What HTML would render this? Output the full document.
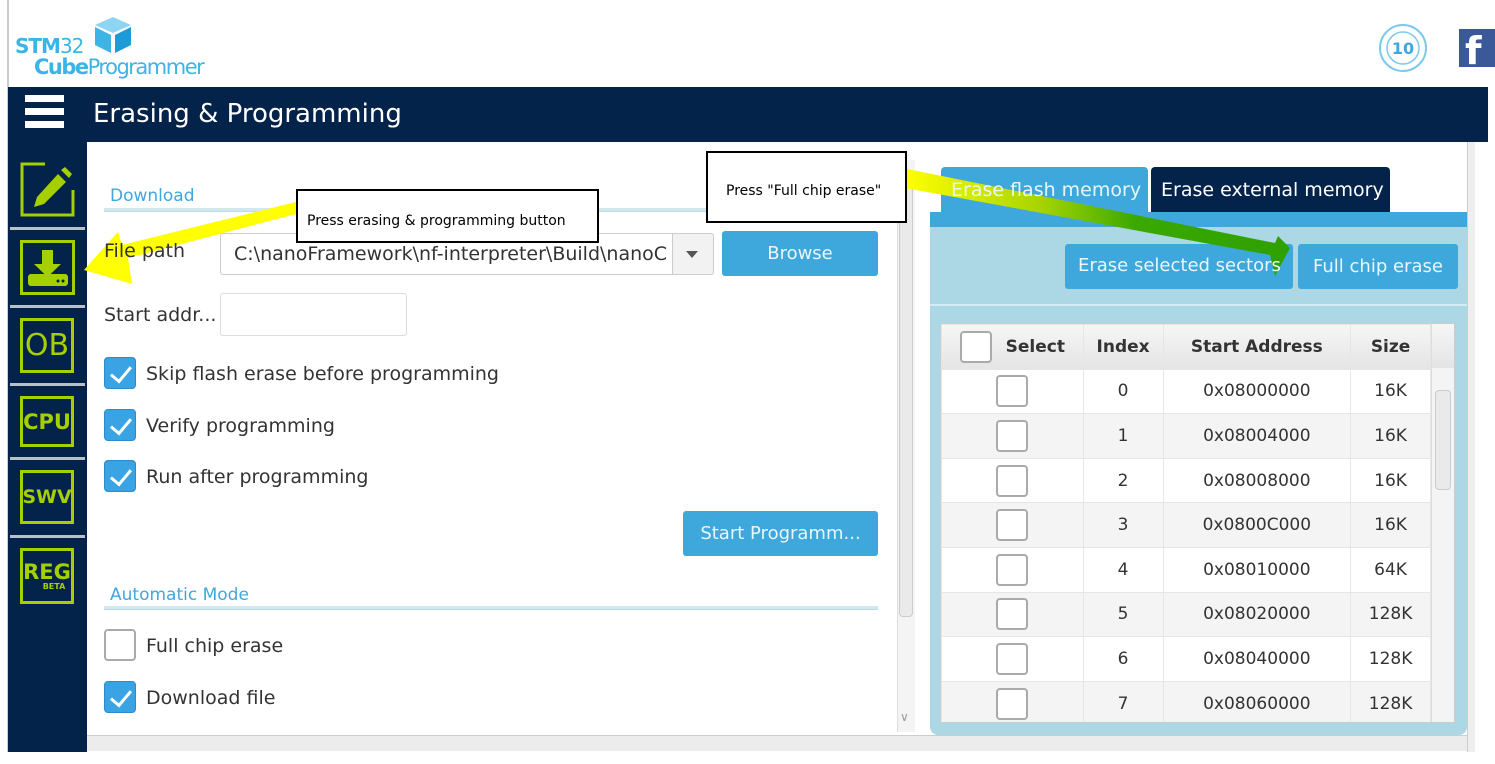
<!DOCTYPE html>
<html><head><meta charset="utf-8"><style>
*{margin:0;padding:0;box-sizing:border-box}
body{width:1495px;height:764px;position:relative;overflow:hidden;background:#fff;font-family:"DejaVu Sans","Liberation Sans",sans-serif;color:#333}
.a{position:absolute}
.nav{background:#03234b}
.ib{position:absolute;left:20px;width:54px;border:3px solid #a6cf00;color:#a6cf00;font-weight:bold;display:flex;align-items:center;justify-content:center}
.sep{position:absolute;left:10px;width:75px;height:3px;background:#b8c0cc}
.cb{position:absolute;width:32px;height:32px;border-radius:4px;background:#3aa3e3;border:1px solid #2a8cc8}
.cb::after{content:"";position:absolute;left:10px;top:4px;width:9px;height:17px;border:solid #fff;border-width:0 3px 3px 0;transform:rotate(40deg)}
.cbe{position:absolute;width:32px;height:32px;border-radius:4px;background:#fff;border:2px solid #aaa}
.lbl{position:absolute;font-size:19px;color:#333;z-index:3}
.btn{position:absolute;background:#3ea8dc;color:#eaf6fb;border-radius:3px;font-size:18px;display:flex;align-items:center;justify-content:center}
.sec{position:absolute;color:#3ea8dc;font-size:17px}
.line{position:absolute;height:4px;background:#d3e7ef;border-bottom:1px solid #b8dbe9}
table{border-collapse:collapse}
td{border:1px solid #e6e6e6;text-align:center;font-size:17px;color:#333;height:44.6px}
.sq{display:inline-block;width:32px;height:32px;border:2px solid #aaa;border-radius:4px;background:#fff;vertical-align:middle}
.note{position:absolute;border:2px solid #000;background:#fff;font-family:"DejaVu Sans",sans-serif;font-size:14px;color:#000;z-index:4}
</style></head><body>
<div class="a" style="left:7px;top:0;width:2px;height:752px;background:#ccc"></div>
<!-- logo -->
<div class="a" style="left:15px;top:34px;font-size:20px;font-weight:bold;color:#3cb4e5;letter-spacing:-1px">STM<span style="font-weight:normal">32</span></div>
<div class="a" style="left:34px;top:55px;font-size:21px;color:#3cb4e5;letter-spacing:-1.5px"><b>Cube</b>Programmer</div>
<svg class="a" style="left:92px;top:15px" width="42" height="40" viewBox="0 0 42 40"><polygon points="21,2 39,10 21,18 3,10" fill="#8ed4f3"/><polygon points="3,12 19,20 19,38 3,30" fill="#3cb4e5"/><polygon points="23,20 39,12 39,30 23,38" fill="#1e9ad6"/></svg>
<svg class="a" style="left:1377px;top:22px" width="52" height="52"><circle cx="26" cy="26" r="23" fill="none" stroke="#7cc9ee" stroke-width="2"/><circle cx="26" cy="26" r="16" fill="none" stroke="#7cc9ee" stroke-width="1.5"/><text x="26" y="32" font-size="16" font-weight="bold" text-anchor="middle" fill="#3ba9e0">10</text></svg>
<div class="a" style="left:1459px;top:29px;width:36px;height:38px;background:#3b5998;color:#fff;font-size:38px;font-weight:bold;padding-left:6px;line-height:44px;overflow:hidden">f</div>
<!-- top bar -->
<div class="a nav" style="left:8px;top:87px;width:1480px;height:55px"></div>
<div class="a" style="left:25px;top:95px;width:39px;height:7px;background:#fff"></div>
<div class="a" style="left:25px;top:108px;width:39px;height:7px;background:#fff"></div>
<div class="a" style="left:25px;top:121px;width:39px;height:7px;background:#fff"></div>
<div class="a" style="left:93px;top:99px;font-size:26px;color:#fff">Erasing &amp; Programming</div>
<!-- sidebar -->
<div class="a nav" style="left:8px;top:142px;width:79px;height:610px"></div>
<svg class="a" style="left:20px;top:162px" width="56" height="56" viewBox="0 0 56 56"><path d="M25 2H2V53H53V28" fill="none" stroke="#a6cf00" stroke-width="3"/><path d="M38 12l8 8-22 22-10 3 3-10z" fill="#a6cf00"/><path d="M41 8l4-3 7 7-3 4z" fill="#a6cf00"/></svg>
<div class="sep" style="top:227px"></div>
<svg class="a" style="left:20px;top:240px" width="56" height="56" viewBox="0 0 56 56"><rect x="1.5" y="1.5" width="52" height="52" fill="none" stroke="#a6cf00" stroke-width="3"/><rect x="22" y="10" width="11" height="14" fill="#a6cf00"/><polygon points="14,24 41,24 27.5,37" fill="#a6cf00"/><rect x="8" y="34" width="40" height="12" rx="3" fill="#a6cf00"/><circle cx="38" cy="41" r="1.5" fill="#03234b"/><circle cx="43" cy="41" r="1.5" fill="#03234b"/></svg>
<div class="sep" style="top:305px"></div>
<div class="ib" style="top:318px;height:55px;font-size:30px;font-weight:normal">OB</div>
<div class="sep" style="top:383px"></div>
<div class="ib" style="top:396px;height:51px;font-size:21px">CPU</div>
<div class="sep" style="top:457px"></div>
<div class="ib" style="top:470px;height:54px;font-size:19px">SWV</div>
<div class="sep" style="top:535px"></div>
<div class="ib" style="top:548px;height:56px;font-size:21px;flex-direction:column;line-height:20px">REG<span style="font-size:8px;line-height:9px;padding-left:14px">BETA</span></div>
<!-- bottom/right edges -->
<div class="a" style="left:87px;top:735px;width:1382px;height:16px;background:#ececec;border-top:1px solid #ccc"></div>
<div class="a" style="left:1467px;top:142px;width:8px;height:610px;background:#eee;border-left:1px solid #ccc"></div>
<!-- left panel -->
<div class="sec" style="left:110px;top:186px">Download</div>
<div class="line" style="left:104px;top:208px;width:774px"></div>
<div class="lbl" style="left:104px;top:240px">File path</div>
<div class="a" style="left:220px;top:233px;width:494px;height:42px;border:1px solid #ccc;border-radius:3px;background:#fff;font-size:19px;line-height:40px;padding-left:13px;overflow:hidden;white-space:nowrap;color:#333">C:\nanoFramework\nf-interpreter\Build\nanoC</div>
<div class="a" style="left:672px;top:233px;width:42px;height:42px;border:1px solid #ccc;background:#f2f2f2;border-radius:0 3px 3px 0"></div>
<div class="a" style="left:686px;top:251px;border:6px solid transparent;border-top:7px solid #555"></div>
<div class="btn" style="left:722px;top:231px;width:156px;height:45px">Browse</div>
<div class="lbl" style="left:104px;top:304px">Start addr...</div>
<div class="a" style="left:220px;top:293px;width:187px;height:43px;border:1px solid #ddd;border-radius:3px"></div>
<div class="cb" style="left:104px;top:357px"></div><div class="lbl" style="left:146px;top:363px">Skip flash erase before programming</div>
<div class="cb" style="left:104px;top:409px"></div><div class="lbl" style="left:146px;top:415px">Verify programming</div>
<div class="cb" style="left:104px;top:460px"></div><div class="lbl" style="left:146px;top:466px">Run after programming</div>
<div class="btn" style="left:683px;top:511px;width:195px;height:45px">Start Programm...</div>
<div class="sec" style="left:110px;top:585px">Automatic Mode</div>
<div class="line" style="left:104px;top:606px;width:774px"></div>
<div class="cbe" style="left:104px;top:629px"></div><div class="lbl" style="left:146px;top:635px">Full chip erase</div>
<div class="cb" style="left:104px;top:681px"></div><div class="lbl" style="left:146px;top:687px">Download file</div>
<div class="a" style="left:897px;top:160px;width:18px;height:572px;background:#f4f4f4;border-left:1px solid #ddd"></div>
<div class="a" style="left:899px;top:185px;width:14px;height:432px;background:#eaeaea;border:1px solid #ccc;border-radius:4px"></div>
<div class="a" style="left:900px;top:710px;font-size:12px;color:#999">∨</div>
<!-- right panel -->
<div class="a" style="left:941px;top:167px;width:207px;height:46px;background:#3ea8dc;border-radius:4px 4px 0 0"></div>
<div class="a" style="left:951px;top:167px;color:#e8f6fb;font-size:19px;line-height:46px;z-index:3">Erase flash memory</div>
<div class="a" style="left:1151px;top:167px;width:239px;height:46px;background:#03234b;border-radius:4px 4px 0 0;color:#fff;font-size:19px;line-height:46px;padding-left:10px">Erase external memory</div>
<div class="a" style="left:930px;top:212px;width:537px;height:523px;background:#acd8e6;border-radius:0 0 8px 8px"></div>
<div class="a" style="left:930px;top:212px;width:537px;height:15px;background:#3ea8dc"></div>
<div class="a" style="left:930px;top:304px;width:537px;height:2px;background:#d3ebf2"></div>
<div class="btn" style="left:1065px;top:244px;width:228px;height:45px"></div>
<div class="a" style="left:1078px;top:255px;color:#eaf6fb;font-size:18px;z-index:3">Erase selected sectors</div>
<div class="btn" style="left:1298px;top:244px;width:160px;height:45px">Full chip erase</div>
<div class="a" style="left:940px;top:323px;width:515px;height:400px;background:#fff;border:1px solid #ccc;overflow:hidden">
<table style="width:490px">
<tr style="background:linear-gradient(#f6f6f6,#e4e4e4)"><td style="width:142px;font-weight:bold;height:44px"><span class="sq" style="margin-right:14px"></span>Select</td><td style="width:80px;font-weight:bold">Index</td><td style="width:188px;font-weight:bold">Start Address</td><td style="width:80px;font-weight:bold">Size</td></tr>
<tr><td><span class="sq"></span></td><td>0</td><td>0x08000000</td><td>16K</td></tr>
<tr style="background:#f4f4f4"><td><span class="sq"></span></td><td>1</td><td>0x08004000</td><td>16K</td></tr>
<tr><td><span class="sq"></span></td><td>2</td><td>0x08008000</td><td>16K</td></tr>
<tr style="background:#f4f4f4"><td><span class="sq"></span></td><td>3</td><td>0x0800C000</td><td>16K</td></tr>
<tr><td><span class="sq"></span></td><td>4</td><td>0x08010000</td><td>64K</td></tr>
<tr style="background:#f4f4f4"><td><span class="sq"></span></td><td>5</td><td>0x08020000</td><td>128K</td></tr>
<tr><td><span class="sq"></span></td><td>6</td><td>0x08040000</td><td>128K</td></tr>
<tr style="background:#f4f4f4"><td><span class="sq"></span></td><td>7</td><td>0x08060000</td><td>128K</td></tr>
</table>
<div class="a" style="left:490px;top:0;width:24px;height:44px;background:linear-gradient(#f6f6f6,#e4e4e4);border-left:1px solid #ddd"></div>
<div class="a" style="left:490px;top:44px;width:24px;height:356px;background:#f4f4f4;border-left:1px solid #ddd"></div>
<div class="a" style="left:494px;top:66px;width:16px;height:100px;background:#eaeaea;border:1px solid #ccc;border-radius:4px"></div>
</div>
<!-- annotations -->
<svg class="a" style="left:0;top:0;z-index:2" width="1495" height="764">
<defs><linearGradient id="g" x1="0" x2="1"><stop offset="0" stop-color="#ffff00"/><stop offset="0.35" stop-color="#a8d400"/><stop offset="0.6" stop-color="#3aa800"/><stop offset="1" stop-color="#2ea000"/></linearGradient></defs>
<polygon points="296,202 300,213 128,258 132,284 84,270 118,232 122,245" fill="#ffff00"/>
<polygon points="905,168 905,188 1270,255 1275,276 1290,248 1278,236 1275,243 912,170" fill="url(#g)"/>
</svg>
<div class="note" style="left:296px;top:189px;width:303px;height:54px;padding:22px 0 0 9px">Press erasing &amp; programming button</div>
<div class="note" style="left:706px;top:151px;width:201px;height:72px;padding:30px 0 0 18px">Press "Full chip erase"</div>
</body></html>
